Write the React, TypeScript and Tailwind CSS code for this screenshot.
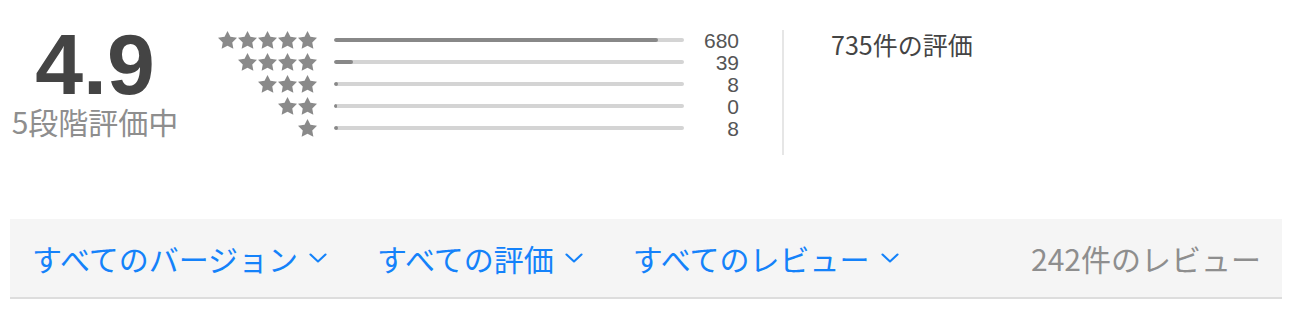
import React from "react";

const rows = [
  { stars: 5, count: 680 },
  { stars: 4, count: 39 },
  { stars: 3, count: 8 },
  { stars: 2, count: 0 },
  { stars: 1, count: 8 },
];
const total = 735;

function Star() {
  return (
    <svg width="19" height="18" viewBox="2 2 20 19.2" preserveAspectRatio="none" className="block">
      <path
        d="M12 2l3.09 6.26L22 9.27l-5 4.87 1.18 6.88L12 17.77l-6.18 3.25L7 14.14 2 9.27l6.91-1.01L12 2z"
        fill="#8a8a8a"
      />
    </svg>
  );
}

function Chevron() {
  return (
    <svg width="18" height="10" viewBox="0 0 18 10" className="block">
      <path d="M1.5 1.5 L9 8.5 L16.5 1.5" fill="none" stroke="#1482fa" strokeWidth="2.1" strokeLinecap="round" strokeLinejoin="round" />
    </svg>
  );
}

export default function App() {
  return (
    <div className="w-[1292px] h-[314px] bg-white overflow-hidden font-['Noto_Sans_CJK_JP',sans-serif]">
      <div className="flex items-start pt-[22px] pl-[10px]">
        <div className="w-[170px] flex flex-col items-center">
          <div className="mt-[4px] text-[86px] leading-[76px] font-bold text-[#444444] font-['Liberation_Sans',sans-serif]">4.9</div>
          <div className="mt-[4px] text-[30px] leading-[30px] text-[#8e8e8e]">5段階評価中</div>
        </div>
        <div className="ml-[38px] mt-[7px] flex flex-col">
          {rows.map((r) => (
            <div key={r.stars} className="h-[22px] flex items-center">
              <div className="w-[99px] flex justify-end gap-[1px]">
                {Array.from({ length: r.stars }).map((_, i) => (
                  <Star key={i} />
                ))}
              </div>
              <div className="ml-[17px] w-[350px] h-[4px] rounded-full bg-[#d4d4d4] overflow-hidden">
                <div
                  className="h-full bg-[#888888] rounded-full"
                  style={{ width: `${Math.max((r.count / total) * 100, 0.9)}%` }}
                />
              </div>
              <div className="w-[55px] text-right text-[21px] leading-[22px] text-[#555555] font-['Liberation_Sans',sans-serif] pt-[1px]">
                {r.count}
              </div>
            </div>
          ))}
        </div>
        <div className="ml-[43px] mt-[8px] w-[2px] h-[125px] bg-[#e6e6e6]" />
        <div className="ml-[47px] mt-[10px] text-[25px] leading-[25px] text-[#444444]">
          735件の評価
        </div>
      </div>
      <div className="mx-[10px] mt-[64px] h-[80px] bg-[#f5f5f5] border-b-2 border-[#dddddd] flex items-center pl-[22px] pr-[21px]">
        <div className="flex items-center gap-[50px] text-[30px] leading-[30px] text-[#1482fa]">
          <div className="flex items-center gap-[11px]">
            <span>すべてのバージョン</span>
            <Chevron />
          </div>
          <div className="flex items-center gap-[11px]">
            <span>すべての評価</span>
            <Chevron />
          </div>
          <div className="flex items-center gap-[11px]">
            <span>すべてのレビュー</span>
            <Chevron />
          </div>
        </div>
        <div className="ml-auto text-[30px] leading-[30px] text-[#8e8e8e]">
          242件のレビュー
        </div>
      </div>
    </div>
  );
}
